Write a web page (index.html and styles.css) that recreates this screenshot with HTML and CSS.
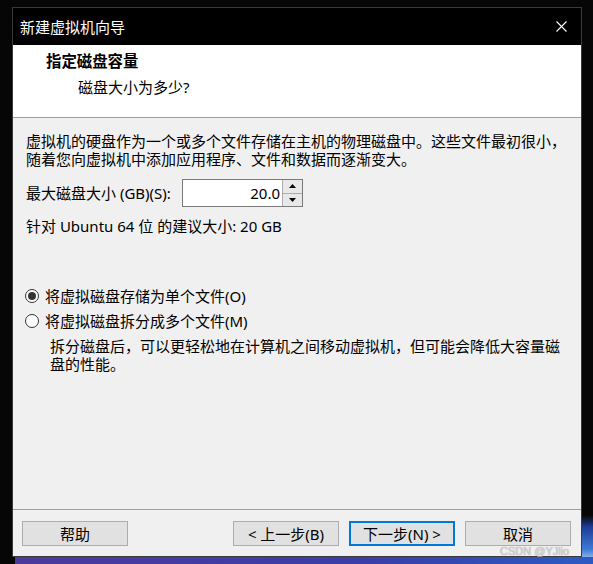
FILE: index.html
```html
<!DOCTYPE html>
<html lang="zh-CN">
<head>
  <meta charset="UTF-8">
  <meta name="viewport" content="width=device-width, initial-scale=1.0">
  <title>新建虚拟机向导</title>
  <link rel="stylesheet" href="styles.css">
</head>
<body>
  <div class="window">
    <div class="titlebar">
      <span class="title">新建虚拟机向导</span>
      <svg class="close" width="11" height="11" viewBox="0 0 11 11">
        <path d="M0.5 0.5 L10.5 10.5 M10.5 0.5 L0.5 10.5" stroke="#fff" stroke-width="1.1" fill="none"/>
      </svg>
    </div>

    <div class="header">
      <h1>指定磁盘容量</h1>
      <p>磁盘大小为多少?</p>
    </div>

    <div class="content">
      <p class="intro">虚拟机的硬盘作为一个或多个文件存储在主机的物理磁盘中。这些文件最初很小，<br>随着您向虚拟机中添加应用程序、文件和数据而逐渐变大。</p>

      <div class="size-row">
        <label for="size">最大磁盘大小 (GB)(S):</label>
        <div class="spin">
          <input type="text" id="size" value="20.0">
          <div class="spin-btns">
            <button class="spin-btn">
              <svg width="7" height="4" viewBox="0 0 7 4"><path d="M0 4 L3.5 0 L7 4 Z" fill="#000"/></svg>
            </button>
            <button class="spin-btn">
              <svg width="7" height="4" viewBox="0 0 7 4"><path d="M0 0 L7 0 L3.5 4 Z" fill="#000"/></svg>
            </button>
          </div>
        </div>
      </div>

      <p class="hint">针对 Ubuntu 64 位 的建议大小: 20 GB</p>

      <div class="options">
        <div class="radio checked"><span class="circle"></span>将虚拟磁盘存储为单个文件(O)</div>
        <div class="radio"><span class="circle"></span>将虚拟磁盘拆分成多个文件(M)</div>
      </div>
      <p class="note">拆分磁盘后，可以更轻松地在计算机之间移动虚拟机，但可能会降低大容量磁<br>盘的性能。</p>
    </div>

    <div class="footer">
      <button class="btn">帮助</button>
      <div class="nav">
        <button class="btn">&lt; 上一步(B)</button>
        <button class="btn btn-default">下一步(N) &gt;</button>
        <button class="btn">取消</button>
      </div>
    </div>
  </div>

  <span class="watermark">CSDN @YJlio</span>
</body>
</html>
```

FILE: styles.css
```css
html {
  background:
    linear-gradient(90deg, #4b3a9c, #3a3ea8 60%, #2b5cc6) 15px 557px / 100% 7px no-repeat,
    linear-gradient(180deg, #060606 0, #1b3e98 25%, #3d7ad8 70%, #c9dcf5) 582px 515px / 11px 49px no-repeat,
    #060606;
}
body {
  margin: 0;
  padding: 7px 0 0 12px;
  height: 564px;
  box-sizing: border-box;
  font-family: "Noto Sans", "Noto Sans CJK SC", sans-serif;
  font-size: 15px;
  line-height: 18px;
  color: #000;
  overflow: hidden;
}
p {
  margin: 0;
}
.window {
  width: 570px;
  height: 550px;
  box-sizing: border-box;
  border: 1px solid #3a3a3a;
  display: flex;
  flex-direction: column;
  background-color: #f0f0f0;
}
.titlebar {
  height: 37px;
  flex-shrink: 0;
  background-color: #000;
  color: #fff;
  display: flex;
  align-items: center;
  padding: 0 14px 0 7px;
}
.title {
  flex: 1;
}
.close {
  display: block;
}
.header {
  height: 64px;
  flex-shrink: 0;
  background-color: #fff;
  border-bottom: 1px solid #a0a0a0;
  padding: 8px 0 0 33px;
}
.header h1 {
  margin: 0;
  font-size: 15.4px;
  font-weight: bold;
  line-height: 18px;
}
.header p {
  margin-top: 7px;
  padding-left: 32px;
}
.content {
  flex: 1;
  padding: 14px 0 0 13px;
}
.size-row {
  display: flex;
  align-items: center;
  height: 28px;
  margin-top: 11px;
}
.size-row label {
  width: 156px;
}
.spin {
  display: flex;
  height: 28px;
  border: 1px solid #7a7a7a;
  background-color: #fff;
  box-sizing: border-box;
}
.spin input {
  width: 99px;
  border: none;
  padding: 0 2px 0 0;
  font: inherit;
  text-align: right;
  outline: none;
  box-sizing: border-box;
  background: transparent;
}
.spin-btns {
  display: flex;
  flex-direction: column;
  width: 19px;
  border-left: 1px solid #adadad;
}
.spin-btn {
  flex: 1;
  padding: 0;
  border: none;
  border-bottom: 1px solid #adadad;
  background-color: #e8e8e8;
  display: flex;
  align-items: center;
  justify-content: center;
}
.spin-btn:last-child {
  border-bottom: none;
}
.hint {
  margin-top: 10px;
}
.options {
  margin-top: 52px;
}
.radio {
  display: flex;
  align-items: center;
  gap: 6px;
  height: 18px;
  margin-left: -1px;
  margin-bottom: 7px;
}
.circle {
  width: 14px;
  height: 14px;
  box-sizing: border-box;
  border: 1px solid #333;
  border-radius: 50%;
  background-color: #fff;
  display: flex;
  align-items: center;
  justify-content: center;
}
.radio.checked .circle::after {
  content: "";
  width: 8px;
  height: 8px;
  border-radius: 50%;
  background-color: #333;
}
.note {
  padding-left: 24px;
}
.footer {
  height: 35px;
  flex-shrink: 0;
  border-top: 1px solid #a0a0a0;
  display: flex;
  align-items: flex-start;
  padding: 11px 10px 0 9px;
}
.nav {
  margin-left: auto;
  display: flex;
  gap: 10px;
}
.btn {
  width: 106px;
  height: 25px;
  box-sizing: border-box;
  border: 1px solid #adadad;
  background-color: #e1e1e1;
  font: inherit;
  padding: 0;
  color: #000;
}
.btn-default {
  border: 2px solid #0078d7;
}
.watermark {
  position: absolute;
  left: 500px;
  top: 542px;
  font-family: "Liberation Sans", sans-serif;
  font-size: 11px;
  color: rgba(220, 220, 220, 0.85);
  text-shadow: 0 0 1px rgba(80, 80, 80, 0.6);
}
```
